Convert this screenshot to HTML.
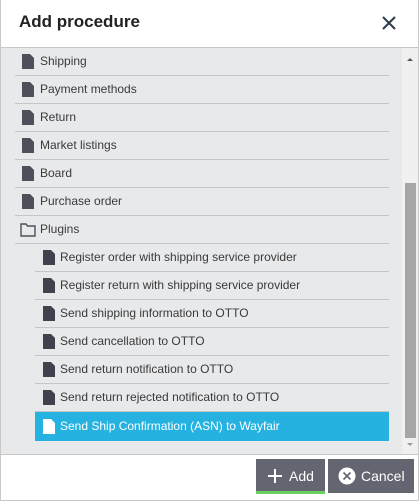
<!DOCTYPE html>
<html><head><style>
*{margin:0;padding:0;box-sizing:border-box}
body{width:419px;height:501px;overflow:hidden;background:#fff;font-family:"Liberation Sans",Arial,sans-serif;position:relative}
.dlg{position:absolute;left:0;top:0;width:419px;height:501px;border-left:1px solid #c8c8c8;border-right:1px solid #c8c8c8;border-bottom:1px solid #c8c8c8}
.hd{position:absolute;left:19px;top:12px;font-size:17px;font-weight:bold;color:#222}
.x{position:absolute;left:381px;top:15px}
.list{position:absolute;left:1px;top:47px;width:417px;height:408px;background:#e8e9eb;border-top:1px solid #c8c8c8;border-bottom:1px solid #c8c8c8;overflow:hidden}
.row{position:absolute;height:28px;border-bottom:1px solid #c6c6c6;font-size:12px;color:#3a3a3a;line-height:27px}
.row svg{position:absolute;top:6px}
.row span{position:absolute}
.sel{background:#25b2e0;color:#fff;border-bottom:none}
.sb{position:absolute;left:401px;top:0;width:16px;height:406px;background:#f0f0f0}
.th{position:absolute;left:3px;top:135px;width:11px;height:255px;background:#a6a6a6}
.btn{position:absolute;top:459px;height:34px;background:#636571;color:#fff;font-size:14px;line-height:34px}
</style></head><body>
<div class="dlg"></div>
<div class="hd">Add procedure</div>
<svg class="x" width="16" height="16" viewBox="0 0 16 16"><path d="M2 2L14 14M14 2L2 14" stroke="#2d3a4a" stroke-width="2"/></svg>
<div class="list">
<div class="row" style="left:14px;width:374px;top:0"><svg width="12" height="15" viewBox="0 0 12 15" style="left:7px"><path d="M0 0H8L12 4V15H0Z" fill="#4d4f5a"/></svg><span style="left:25px">Shipping</span></div>
<div class="row" style="left:14px;width:374px;top:28px"><svg width="12" height="15" viewBox="0 0 12 15" style="left:7px"><path d="M0 0H8L12 4V15H0Z" fill="#4d4f5a"/></svg><span style="left:25px">Payment methods</span></div>
<div class="row" style="left:14px;width:374px;top:56px"><svg width="12" height="15" viewBox="0 0 12 15" style="left:7px"><path d="M0 0H8L12 4V15H0Z" fill="#4d4f5a"/></svg><span style="left:25px">Return</span></div>
<div class="row" style="left:14px;width:374px;top:84px"><svg width="12" height="15" viewBox="0 0 12 15" style="left:7px"><path d="M0 0H8L12 4V15H0Z" fill="#4d4f5a"/></svg><span style="left:25px">Market listings</span></div>
<div class="row" style="left:14px;width:374px;top:112px"><svg width="12" height="15" viewBox="0 0 12 15" style="left:7px"><path d="M0 0H8L12 4V15H0Z" fill="#4d4f5a"/></svg><span style="left:25px">Board</span></div>
<div class="row" style="left:14px;width:374px;top:140px"><svg width="12" height="15" viewBox="0 0 12 15" style="left:7px"><path d="M0 0H8L12 4V15H0Z" fill="#4d4f5a"/></svg><span style="left:25px">Purchase order</span></div>
<div class="row" style="left:14px;width:374px;top:168px"><svg width="16" height="14" viewBox="0 0 16 14" style="left:5px;top:7px"><path d="M1 1H6L7.5 3H15V13H1Z" fill="none" stroke="#4d4f5a" stroke-width="1.4"/></svg><span style="left:25px">Plugins</span></div>
<div class="row" style="left:34px;width:354px;top:196px"><svg width="12" height="15" viewBox="0 0 12 15" style="left:8px"><path d="M0 0H8L12 4V15H0Z" fill="#3f414c"/></svg><span style="left:25px">Register order with shipping service provider</span></div>
<div class="row" style="left:34px;width:354px;top:224px"><svg width="12" height="15" viewBox="0 0 12 15" style="left:8px"><path d="M0 0H8L12 4V15H0Z" fill="#3f414c"/></svg><span style="left:25px">Register return with shipping service provider</span></div>
<div class="row" style="left:34px;width:354px;top:252px"><svg width="12" height="15" viewBox="0 0 12 15" style="left:8px"><path d="M0 0H8L12 4V15H0Z" fill="#3f414c"/></svg><span style="left:25px">Send shipping information to OTTO</span></div>
<div class="row" style="left:34px;width:354px;top:280px"><svg width="12" height="15" viewBox="0 0 12 15" style="left:8px"><path d="M0 0H8L12 4V15H0Z" fill="#3f414c"/></svg><span style="left:25px">Send cancellation to OTTO</span></div>
<div class="row" style="left:34px;width:354px;top:308px"><svg width="12" height="15" viewBox="0 0 12 15" style="left:8px"><path d="M0 0H8L12 4V15H0Z" fill="#3f414c"/></svg><span style="left:25px">Send return notification to OTTO</span></div>
<div class="row" style="left:34px;width:354px;top:336px"><svg width="12" height="15" viewBox="0 0 12 15" style="left:8px"><path d="M0 0H8L12 4V15H0Z" fill="#3f414c"/></svg><span style="left:25px">Send return rejected notification to OTTO</span></div>
<div class="row sel" style="left:34px;width:354px;top:364px;height:29px;line-height:28px"><svg width="12" height="15" viewBox="0 0 12 15" style="left:8px;top:7px"><path d="M0 0H8L12 4V15H0Z" fill="#fff"/></svg><span style="left:25px">Send Ship Confirmation (ASN) to Wayfair</span></div>
<div class="sb"><svg width="16" height="10" style="position:absolute;top:6px"><path d="M5 7L8 4L11 7Z" fill="#555"/></svg><div class="th"></div><svg width="16" height="10" style="position:absolute;top:392px"><path d="M5 3L8 6L11 3Z" fill="#999"/></svg></div>
</div>
<div class="btn" style="left:256px;width:69px;border-bottom:3px solid #6bd062;height:35px"><svg width="14" height="14" style="position:absolute;left:12px;top:10px"><path d="M7 0V14M0 7H14" stroke="#fff" stroke-width="2"/></svg><span style="position:absolute;left:33px">Add</span></div>
<div class="btn" style="left:328px;width:86px"><svg width="18" height="18" style="position:absolute;left:10px;top:8px"><circle cx="9" cy="9" r="8.5" fill="#fff"/><path d="M5.5 5.5L12.5 12.5M12.5 5.5L5.5 12.5" stroke="#636571" stroke-width="1.6"/></svg><span style="position:absolute;left:33px">Cancel</span></div>
</body></html>
